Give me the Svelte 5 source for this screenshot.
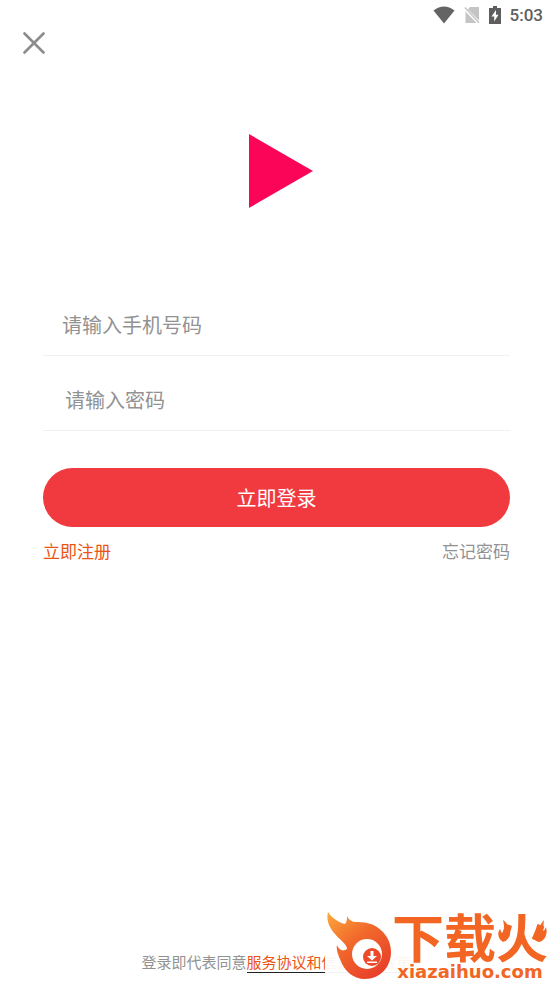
<script lang="ts">
	let phone = $state('');
	let password = $state('');

	function submit(e: SubmitEvent) {
		e.preventDefault();
	}
</script>

<div class="page">
	<div class="status">
		<svg width="22" height="18" viewBox="0 0 22 18" aria-hidden="true">
			<path d="M0.5 4.5Q11 -3.5 21.5 4.5L11 17.5Z" fill="#646464" />
		</svg>
		<svg width="16" height="18" viewBox="0 0 16 18" aria-hidden="true">
			<path d="M6 1H15V14.5L4 3.2ZM1.5 5.5L12.5 17H1.5Z" fill="#c4c4c4" />
			<path d="M1 1.5L15 16.8" stroke="#c4c4c4" stroke-width="1.5" />
		</svg>
		<svg width="12" height="18" viewBox="0 0 12 18" aria-hidden="true">
			<path d="M4 0H8V2H12V18H0V2H4Z" fill="#5e5e5e" />
			<path d="M7 4L2.5 10.5H5.2V15.5L9.5 8.7H7Z" fill="#fff" />
		</svg>
		<span class="time">5:03</span>
	</div>

	<button class="close" type="button" aria-label="关闭">
		<svg width="22" height="22" viewBox="0 0 22 22" aria-hidden="true">
			<path d="M1.5 1.5L20.5 20.5M20.5 1.5L1.5 20.5" stroke="#8c8c8c" stroke-width="2.6" stroke-linecap="round" />
		</svg>
	</button>

	<svg class="logo" width="66" height="76" viewBox="0 0 66 76" aria-hidden="true">
		<path d="M1 1L65 38L1 75Z" fill="#fb0559" />
	</svg>

	<form class="form" onsubmit={submit}>
		<input class="field" type="tel" placeholder="请输入手机号码" aria-label="手机号码" bind:value={phone} />
		<input class="field pwd" type="password" placeholder="请输入密码" aria-label="密码" bind:value={password} />
		<button class="submit" type="submit">立即登录</button>
		<div class="links">
			<a class="register" href="#register">立即注册</a>
			<a class="forgot" href="#forgot">忘记密码</a>
		</div>
	</form>

	<p class="agree">登录即代表同意<a href="#terms">服务协议和信息保护政策</a></p>

	<div class="brand">
		<svg class="flame" width="65" height="70" viewBox="0 0 65 70" aria-hidden="true">
			<defs>
				<linearGradient id="fire" x1="0" y1="0" x2="0.7" y2="1">
					<stop offset="0" stop-color="#fbab3c" />
					<stop offset="0.45" stop-color="#f26b2c" />
					<stop offset="1" stop-color="#e8402a" />
				</linearGradient>
			</defs>
			<path d="M1 1C5 7 11 11 18 13C20 11 20 8 20 5C22 9 25 11 29 11C37 11 44 12 50 16C59 22 64 31 64 41C64 56 53 68 38 68C26 68 17 60 13 48C11 43 9 39 10 34C12 39 16 41 20 38C20 33 13 29 8 23C2 16 -1 9 1 1Z" fill="url(#fire)" />
			<circle cx="40" cy="43" r="15" fill="#fff" />
			<circle cx="45" cy="46" r="9" fill="#ec4a2a" />
			<path d="M43.5 40H46.5V45H50L45 49.5L40 45H43.5ZM40 50.5H50V52H40Z" fill="#fff" />
		</svg>
		<div class="words">
			<span class="name">下载火
				<svg class="sparks" width="52" height="24" viewBox="0 0 52 24" aria-hidden="true">
					<path d="M7 23C2 20 1 14 4 10C5 12 5 13 6 14C9 10 8 5 7 1C12 4 13 9 11 14C13 13 13 11 13 9C16 15 13 21 7 23ZM43 23C38 22 36 17 39 13C40 14 40 15 41 16C44 11 43 6 48 1C47 7 48 9 47 12C49 11 49 10 50 8C52 15 49 22 43 23Z" fill="#f26522" />
				</svg>
			</span>
			<span class="site">xiazaihuo.com</span>
		</div>
	</div>
</div>

<style>
	:global(body) { margin: 0; background: #fff; }

	.page { position: relative; display: flex; flex-direction: column; min-height: 100vh; box-sizing: border-box; font-family: 'Noto Sans CJK SC', sans-serif; color: #929292; overflow: hidden; }
	a { text-decoration: none; }

	.status { display: flex; justify-content: flex-end; align-items: center; gap: 9px; height: 30px; padding-right: 10px; }
	.time { font: 500 17px/20px Roboto, sans-serif; color: #606060; }

	.close { align-self: flex-start; display: flex; margin-left: 15px; padding: 2px 8px; border: 0; background: none; }
	.logo { display: block; margin: 77px auto 0; padding-left: 8px; }

	.form { display: flex; flex-direction: column; margin: 72px 43px 0; }
	.field { width: 100%; height: 75px; box-sizing: border-box; padding: 12px 19px 0; border: 0; border-bottom: 1px solid #f0f0f0; outline: none; background: none; font: 20px 'Noto Sans CJK SC', sans-serif; color: #333; }
	.field.pwd { padding-left: 22px; }
	.field::placeholder { color: #929292; opacity: 1; }
	.submit { height: 59px; margin-top: 37px; border: 0; border-radius: 30px; background: #f03a40; font: 20px 'Noto Sans CJK SC', sans-serif; color: #fff; }
	.links { display: flex; justify-content: space-between; margin-top: 12px; font-size: 17px; line-height: 24px; }
	.register { color: #ea5514; }
	.forgot { color: #929292; }

	.agree { margin: auto 0 10px; text-align: center; font-size: 15px; line-height: 22px; }
	.agree a { color: #ea5514; border-bottom: 1px solid #222; }

	.brand { position: absolute; right: 5px; bottom: 2px; display: flex; align-items: flex-end; padding-left: 2px; background: rgba(255, 255, 255, 0.94); color: #f26522; }
	.words { display: flex; flex-direction: column; align-items: center; }
	.name { position: relative; margin-bottom: 4px; font-size: 52px; font-weight: 700; line-height: 46px; }
	.sparks { position: absolute; right: 0; top: 6px; }
	.site { font: bold 18px/18px 'DejaVu Sans', sans-serif; }
</style>
